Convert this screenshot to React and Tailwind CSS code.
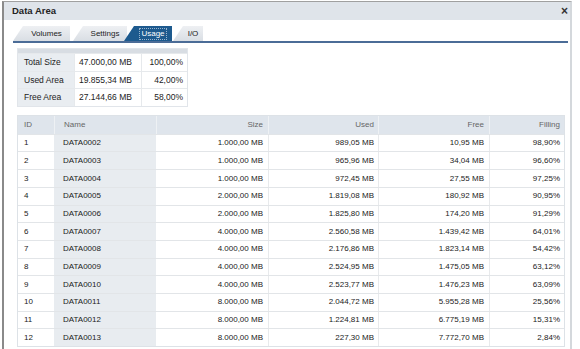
import React from 'react'

const summary = [
  ['Total Size', '47.000,00 MB', '100,00%'],
  ['Used Area', '19.855,34 MB', '42,00%'],
  ['Free Area', '27.144,66 MB', '58,00%'],
]

const rows = [
  ['1', 'DATA0002', '1.000,00 MB', '989,05 MB', '10,95 MB', '98,90%'],
  ['2', 'DATA0003', '1.000,00 MB', '965,96 MB', '34,04 MB', '96,60%'],
  ['3', 'DATA0004', '1.000,00 MB', '972,45 MB', '27,55 MB', '97,25%'],
  ['4', 'DATA0005', '2.000,00 MB', '1.819,08 MB', '180,92 MB', '90,95%'],
  ['5', 'DATA0006', '2.000,00 MB', '1.825,80 MB', '174,20 MB', '91,29%'],
  ['6', 'DATA0007', '4.000,00 MB', '2.560,58 MB', '1.439,42 MB', '64,01%'],
  ['7', 'DATA0008', '4.000,00 MB', '2.176,86 MB', '1.823,14 MB', '54,42%'],
  ['8', 'DATA0009', '4.000,00 MB', '2.524,95 MB', '1.475,05 MB', '63,12%'],
  ['9', 'DATA0010', '4.000,00 MB', '2.523,77 MB', '1.476,23 MB', '63,09%'],
  ['10', 'DATA0011', '8.000,00 MB', '2.044,72 MB', '5.955,28 MB', '25,56%'],
  ['11', 'DATA0012', '8.000,00 MB', '1.224,81 MB', '6.775,19 MB', '15,31%'],
  ['12', 'DATA0013', '8.000,00 MB', '227,30 MB', '7.772,70 MB', '2,84%'],
]

const tabs = [
  { label: 'Volumes', w: 'w-[57px]', ml: 'ml-0' },
  { label: 'Settings', w: 'w-[54px]', ml: 'ml-[3px]' },
  { label: 'Usage', w: 'w-[48px]', ml: 'ml-[-3px]', active: true },
  { label: 'I/O', w: 'w-[30px]', ml: 'ml-[1px]' },
]

const cols = 'grid grid-cols-[36px_102px_112px_110px_111px_75px]'

function Tab({ tab }) {
  return (
    <div
      className={`${tab.w} ${tab.ml} h-[15px] flex items-center justify-center pl-[10px] [clip-path:polygon(10px_0,100%_0,100%_100%,0_100%)] ${
        tab.active ? 'bg-[#1d5a8e] text-white' : 'bg-gradient-to-b from-[#eef0f3] to-[#d9dee4] text-[#222]'
      }`}
    >
      <span className={tab.active ? 'outline outline-1 outline-dotted outline-[#9bb6d0] px-[1px] leading-[10px]' : ''}>
        {tab.label}
      </span>
    </div>
  )
}

export default function App() {
  return (
    <div className="w-[580px] h-[349px] bg-white overflow-hidden font-['Liberation_Sans',Arial,sans-serif] text-[8px] text-[#222] pt-[1px] pl-[2px]">
      <div className="w-[570px] h-[360px] border-l-[2px] border-t border-r-[2px] border-l-[#8a8a8a] border-t-[#a0a0a0] border-r-[#d4d8dc]">
        {/* Header */}
        <div className="h-[19px] bg-[#dfe4ea] flex items-center justify-between pl-[8px] pr-[2px] border-b border-b-white">
          <span className="font-bold text-[9.5px] text-[#222]">Data Area</span>
          <span className="text-[12px] leading-none text-[#333] font-bold">×</span>
        </div>

        {/* Tabs */}
        <div className="pl-[9px] pr-[2px] pt-[5px]">
          <div className="flex items-end">
            {tabs.map((t) => (
              <Tab key={t.label} tab={t} />
            ))}
          </div>
          <div className="h-[2px] bg-[#4b6c97]" />
        </div>

        <div className="pl-[13px] pr-[5px] pt-[5px]">
          {/* Summary */}
          <div className="w-[171px] border border-[#e1e5ea] text-[8.5px]">
            <div className="h-[4px] bg-[#d8dde3]" />
            {summary.map(([a, b, c]) => (
              <div key={a} className="grid grid-cols-[56px_67px_47px] h-[17.6px] border-t border-[#e6e9ec]">
                <div className="bg-[#e9edf1] flex items-center pl-[6px]">{a}</div>
                <div className="flex items-center pl-[4px] border-l border-[#e6e9ec]">{b}</div>
                <div className="flex items-center justify-end pr-[5px] border-l border-[#e6e9ec]">{c}</div>
              </div>
            ))}
          </div>

          {/* Main table */}
          <div className="mt-[8px] w-[548px] border border-[#dde2e7]">
            <div className={`${cols} h-[18px] bg-[#dfe5ec] text-[#666]`}>
              <div className="flex items-center pl-[6px]">ID</div>
              <div className="flex items-center pl-[9px] border-l border-[#eef1f4]">Name</div>
              <div className="flex items-center justify-end pr-[5px] border-l border-[#eef1f4]">Size</div>
              <div className="flex items-center justify-end pr-[4px] border-l border-[#eef1f4]">Used</div>
              <div className="flex items-center justify-end pr-[5px] border-l border-[#eef1f4]">Free</div>
              <div className="flex items-center justify-end pr-[4px] border-l border-[#eef1f4]">Filling</div>
            </div>
            {rows.map((r) => (
              <div key={r[0]} className={`${cols} h-[17.7px] border-t border-[#e2e5e8]`}>
                <div className="flex items-center pl-[6px]">{r[0]}</div>
                <div className="flex items-center pl-[9px] bg-[#e8ecf0]">{r[1]}</div>
                <div className="flex items-center justify-end pr-[5px]">{r[2]}</div>
                <div className="flex items-center justify-end pr-[4px] border-l border-[#e8eaec]">{r[3]}</div>
                <div className="flex items-center justify-end pr-[5px] border-l border-[#e8eaec]">{r[4]}</div>
                <div className="flex items-center justify-end pr-[4px] border-l border-[#e8eaec]">{r[5]}</div>
              </div>
            ))}
          </div>
        </div>
      </div>
    </div>
  )
}
